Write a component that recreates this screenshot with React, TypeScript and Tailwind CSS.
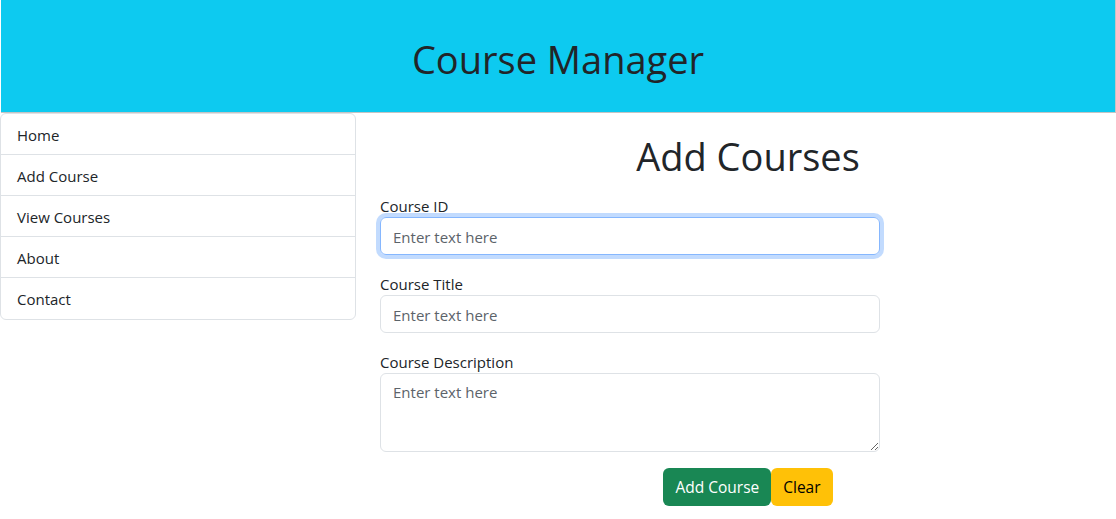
import React from 'react'

const font = { fontFamily: '"Open Sans", "Noto Sans", sans-serif' }

const links = ['Home', 'Add Course', 'View Courses', 'About', 'Contact']

const Field = ({ label, autoFocus }: { label: string; autoFocus?: boolean }) => (
  <div className="mb-4">
    <label className="block h-6 text-[15px] leading-6 pt-px text-[#212529]">{label}</label>
    <input
      type="text"
      placeholder="Enter text here"
      autoFocus={autoFocus}
      className={
        'block w-full h-[38px] px-3 pt-[2px] text-[15px] text-[#212529] rounded-md border outline-none placeholder:text-[#5c636a] ' +
        (autoFocus
          ? 'border-[#86b7fe] shadow-[0_0_0_4px_rgba(13,110,253,0.25)]'
          : 'border-[#dee2e6]')
      }
    />
  </div>
)

export default function App() {
  return (
    <div className="min-h-[519px] bg-white text-[#212529]" style={font}>
      {/* Header */}
      <header className="ml-px h-[113px] flex items-center justify-center bg-[#0dcaf0] border-b border-r border-[#c4c4c4]">
        <h1 className="text-[38px] leading-none pt-[5px] text-[#212529]">Course Manager</h1>
      </header>

      <div className="flex">
        {/* Sidebar */}
        <nav className="w-[356px] shrink-0 self-start border border-[#dee2e6] rounded-md overflow-hidden">
          {links.map((l, i) => (
            <a
              key={l}
              href="#"
              className={
                'block h-[41px] px-4 pt-px leading-[40px] text-[15px] text-[#212529] ' +
                (i < links.length - 1 ? 'border-b border-[#dee2e6]' : '')
              }
            >
              {l}
            </a>
          ))}
        </nav>

        {/* Main */}
        <main className="flex-1 pl-6">
          <h2 className="text-center text-[38px] leading-[48px] mt-[19px] mb-[13px]">Add Courses</h2>
          <form className="w-[500px]">
            <Field label="Course ID" autoFocus />
            <Field label="Course Title" />
            <div className="mb-4">
              <label className="block h-6 text-[15px] leading-6 pt-px">Course Description</label>
              <textarea
                placeholder="Enter text here"
                className="block w-full h-[79px] px-3 py-[7px] text-[15px] rounded-md border border-[#dee2e6] outline-none placeholder:text-[#5c636a]"
              />
            </div>
          </form>
          <div className="flex justify-center">
            <button className="h-[38px] px-3 pt-px rounded-md bg-[#198754] text-white text-[15.5px]">Add Course</button>
            <button className="h-[38px] px-3 pt-px rounded-md bg-[#ffc107] text-black text-[15.5px]">Clear</button>
          </div>
        </main>
      </div>
    </div>
  )
}
